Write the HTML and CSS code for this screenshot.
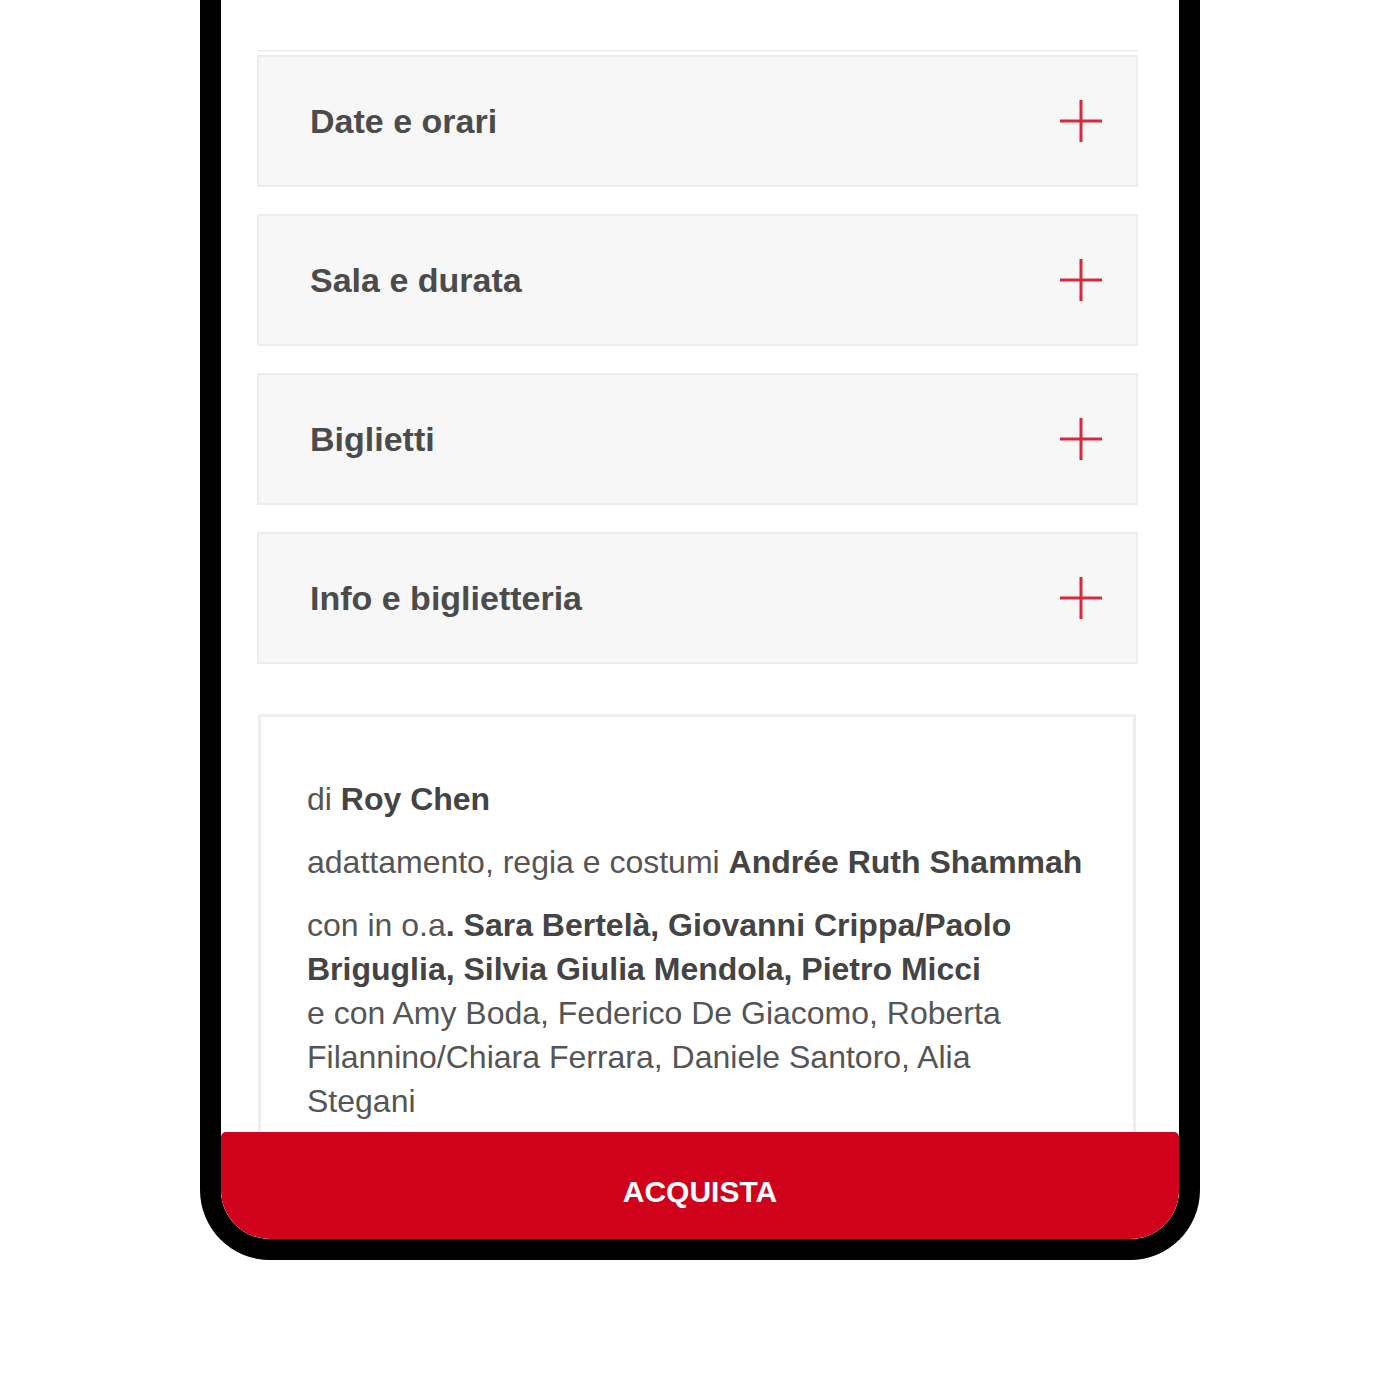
FILE: index.html
```html
<!DOCTYPE html>
<html lang="it">
<head>
<meta charset="utf-8">
<title>Scheda spettacolo</title>
<link rel="stylesheet" href="styles.css">
</head>
<body>
<div class="phone">
  <div class="screen">
    <div class="rule"></div>
    <div class="accordion">
      <div class="item"><span class="item-title">Date e orari</span><svg class="plus" viewBox="0 0 42 42"><path d="M21 0V42M0 21H42"/></svg></div>
      <div class="item"><span class="item-title">Sala e durata</span><svg class="plus" viewBox="0 0 42 42"><path d="M21 0V42M0 21H42"/></svg></div>
      <div class="item"><span class="item-title">Biglietti</span><svg class="plus" viewBox="0 0 42 42"><path d="M21 0V42M0 21H42"/></svg></div>
      <div class="item"><span class="item-title">Info e biglietteria</span><svg class="plus" viewBox="0 0 42 42"><path d="M21 0V42M0 21H42"/></svg></div>
    </div>
    <div class="credits">
      <p>di <strong>Roy Chen</strong></p>
      <p>adattamento, regia e costumi <strong>Andrée Ruth Shammah</strong></p>
      <p>con in o.a<strong>. Sara Bertelà, Giovanni Crippa/Paolo Briguglia, Silvia Giulia Mendola, Pietro Micci</strong><br>e con Amy Boda, Federico De Giacomo, Roberta Filannino/Chiara Ferrara, Daniele Santoro, Alia Stegani</p>
    </div>
    <div class="buy">ACQUISTA</div>
  </div>
</div>
</body>
</html>
```
FILE: styles.css
```css
html, body {
  margin: 0;
  padding: 0;
  background: #fff;
}

body {
  font-family: "Liberation Sans", Arial, sans-serif;
}

.phone {
  width: 958px;
  height: 1239px;
  margin-left: 200px;
  border: 21px solid #000;
  border-top: 0;
  border-radius: 0 0 70px 70px;
  overflow: hidden;
}

.screen {
  position: relative;
  height: 100%;
  box-sizing: border-box;
  padding: 50px 41px 0 36px;
  background: #fff;
  overflow: hidden;
}

.rule {
  height: 2px;
  background: #f0f0f0;
  margin-bottom: 3px;
}

.accordion {
  display: flex;
  flex-direction: column;
  gap: 27px;
}

.item {
  height: 132px;
  box-sizing: border-box;
  border: 2px solid #ededed;
  background: #f7f7f7;
  display: flex;
  align-items: center;
  justify-content: space-between;
  padding: 0 34px 0 51px;
}

.item-title {
  font-size: 34px;
  font-weight: bold;
  color: #4b4b4b;
  letter-spacing: 0;
}

.plus {
  width: 42px;
  height: 42px;
  display: block;
}

.plus path {
  stroke: #d8283f;
  stroke-width: 3;
  fill: none;
}

.credits {
  margin: 50px 2px 0 1px;
  border: 3px solid #eeeeee;
  border-bottom: 0;
  padding: 60px 46px 40px 46px;
  color: #555;
  font-size: 32px;
  line-height: 44px;
}

.credits p {
  margin: 0 0 19px 0;
}

.credits strong {
  color: #444;
  font-weight: bold;
}

.buy {
  position: absolute;
  left: 0;
  right: 0;
  bottom: 0;
  height: 107px;
  box-sizing: border-box;
  padding-top: 42px;
  background: #d0021b;
  border-radius: 5px 5px 0 0;
  color: #fff;
  font-size: 30px;
  line-height: 36px;
  font-weight: bold;
  text-align: center;
}
```
